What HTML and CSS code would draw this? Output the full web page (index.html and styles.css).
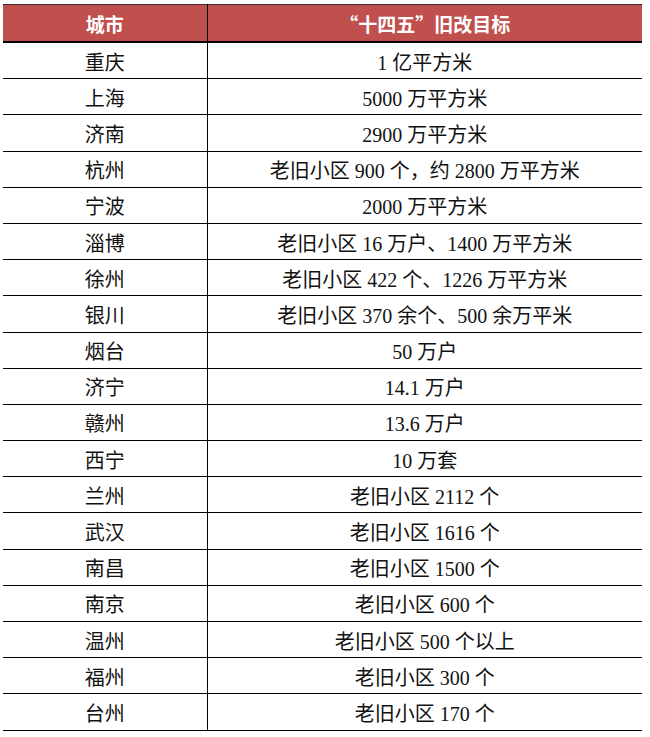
FILE: index.html
```html
<!DOCTYPE html>
<html lang="zh-CN">
<head>
<meta charset="utf-8">
<title>十四五旧改目标</title>
<link rel="stylesheet" href="styles.css">
</head>
<body>
<table class="tbl">
  <colgroup><col class="col-city"><col class="col-goal"></colgroup>
  <thead>
    <tr><th class="city">城市</th><th class="goal">“十四五”旧改目标</th></tr>
  </thead>
  <tbody>
    <tr><td class="city">重庆</td><td>1 亿平方米</td></tr>
    <tr><td class="city">上海</td><td>5000 万平方米</td></tr>
    <tr><td class="city">济南</td><td>2900 万平方米</td></tr>
    <tr><td class="city">杭州</td><td>老旧小区 900 个，约 2800 万平方米</td></tr>
    <tr><td class="city">宁波</td><td>2000 万平方米</td></tr>
    <tr><td class="city">淄博</td><td>老旧小区 16 万户、1400 万平方米</td></tr>
    <tr><td class="city">徐州</td><td>老旧小区 422 个、1226 万平方米</td></tr>
    <tr><td class="city">银川</td><td>老旧小区 370 余个、500 余万平米</td></tr>
    <tr><td class="city">烟台</td><td>50 万户</td></tr>
    <tr><td class="city">济宁</td><td>14.1 万户</td></tr>
    <tr><td class="city">赣州</td><td>13.6 万户</td></tr>
    <tr><td class="city">西宁</td><td>10 万套</td></tr>
    <tr><td class="city">兰州</td><td>老旧小区 2112 个</td></tr>
    <tr><td class="city">武汉</td><td>老旧小区 1616 个</td></tr>
    <tr><td class="city">南昌</td><td>老旧小区 1500 个</td></tr>
    <tr><td class="city">南京</td><td>老旧小区 600 个</td></tr>
    <tr><td class="city">温州</td><td>老旧小区 500 个以上</td></tr>
    <tr><td class="city">福州</td><td>老旧小区 300 个</td></tr>
    <tr><td class="city">台州</td><td>老旧小区 170 个</td></tr>
  </tbody>
</table>
</body>
</html>
```
FILE: styles.css
```css
html, body {
  margin: 0;
  padding: 0;
  background: #ffffff;
}

.tbl {
  border-collapse: collapse;
  table-layout: fixed;
  width: 639px;
  margin: 4px 0 0 3px;
}

.col-city {
  width: 204px;
}

.tbl th {
  height: 36px;
  padding: 0;
  background: #c0504d;
  color: #ffffff;
  font-family: "Noto Sans CJK SC", sans-serif;
  font-weight: 700;
  font-size: 19px;
  line-height: 1;
  text-align: center;
  vertical-align: middle;
  border-top: 1.5px solid #3a2a2a;
  border-bottom: 2px solid #000000;
}

.tbl td {
  height: 31.2px;
  padding: 4px 0 0;
  color: #111111;
  font-family: "Liberation Serif", "Noto Sans CJK SC", serif;
  font-size: 20px;
  line-height: 1;
  text-align: center;
  vertical-align: middle;
  border-bottom: 1.5px solid #000000;
}

.tbl .city {
  border-right: 1px solid #000000;
}
```
